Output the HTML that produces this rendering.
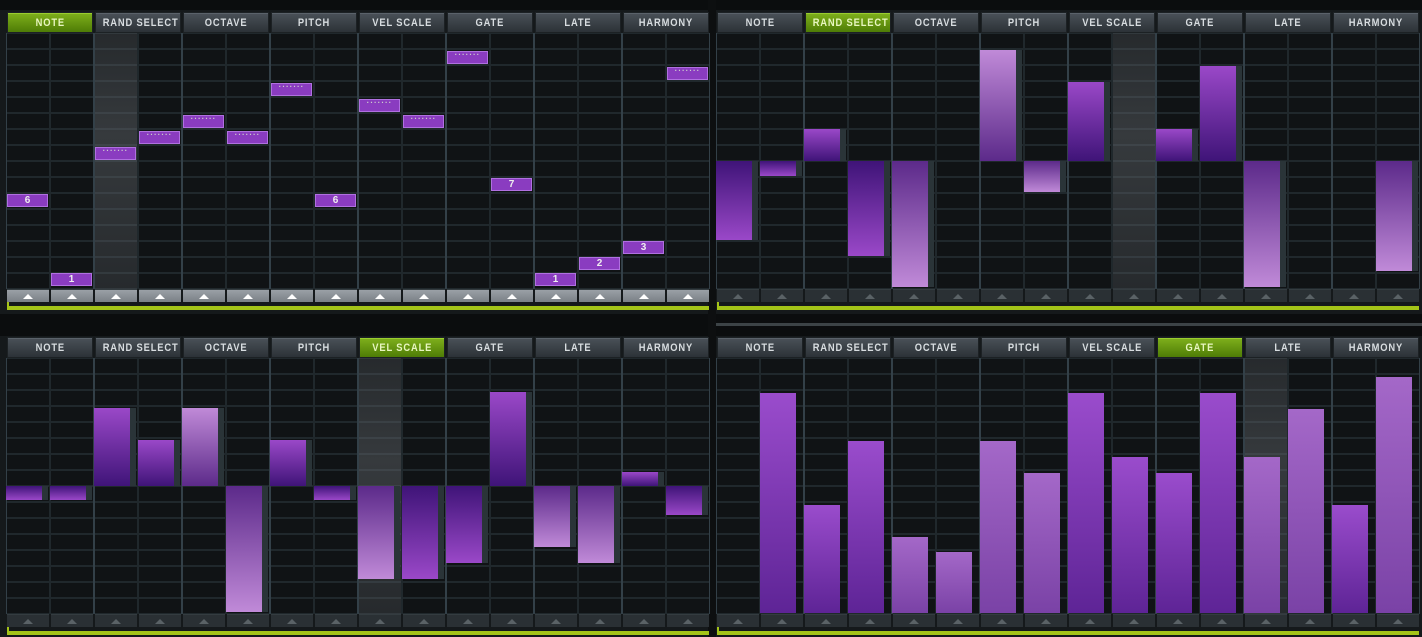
<!DOCTYPE html>
<html><head><meta charset="utf-8">
<style>
*{margin:0;padding:0;box-sizing:border-box}
body{width:1422px;height:637px;background:#15191b;position:relative;overflow:hidden;font-family:"Liberation Sans",sans-serif}
.a{position:absolute}
.grid{position:absolute;width:704px;height:256px;background-color:#101315;
background-image:
linear-gradient(90deg,#334048 0 2px,transparent 2px),
linear-gradient(90deg,#20282c 0 2px,transparent 2px),
linear-gradient(#20282c 0 2px,transparent 2px);
background-size:88px 100%,44px 100%,100% 16px;background-position:-1px 0,-1px 0,0 -1px}
.tab{position:absolute;width:86px;height:21px;background:linear-gradient(#4a5158,#2c3237);border:1px solid #1c2124;box-shadow:inset 0 1px 0 #5a626a;color:#d8dde0;font-size:11px;font-weight:bold;letter-spacing:1px;text-align:center;line-height:20px;white-space:nowrap;overflow:hidden}
.tab span{display:inline-block;transform:scaleX(.85)}
.tab.on{background:linear-gradient(#7fb01c,#4e7c06);color:#e8f6c0;box-shadow:inset 0 1px 0 #9acd30}
.hl{position:absolute;width:42px;height:256px;background:linear-gradient(rgba(90,95,100,.3),rgba(100,105,110,.45) 40%,rgba(90,95,100,.3))}
.btn{position:absolute;width:42px;height:13px;background:#2a3034;border-top:1px solid #343c40}
.btn:after{content:"";position:absolute;left:16px;top:4px;border-left:5px solid transparent;border-right:5px solid transparent;border-bottom:5px solid #5a6266}
.btn.lt{background:linear-gradient(#9aa0a6,#7a8086)}
.btn.lt:after{border-bottom-color:#fff}
.note{position:absolute;width:41px;height:13px;background:#8a3cc0;border:1px solid #b070e0;color:#eee;font-size:10px;font-weight:bold;text-align:center;line-height:11px}
.bar{position:absolute;width:36px}
.sh{position:absolute;width:6px;background:#2a3438}
.gl{position:absolute;height:4px;background:#a4c418}
</style></head><body>
<div class="a" style="left:0;top:0;width:1422px;height:10px;background:#0b0d0e"></div>
<div class="a" style="left:0;top:314px;width:1422px;height:22px;background:#0b0d0e"></div>
<div class="a" style="left:708px;top:323px;width:714px;height:3px;background:#3c4346"></div>
<div class="a" style="left:708px;top:0;width:8px;height:637px;background:#0d0f10"></div>
<div id="root"></div>
<script>
var names=["NOTE","RAND SELECT","OCTAVE","PITCH","VEL SCALE","GATE","LATE","HARMONY"];
var P=[{x:6,y:33,act:0,hl:2,lt:1},{x:716,y:33,act:1,hl:9,lt:0},{x:6,y:358,act:4,hl:8,lt:0},{x:716,y:358,act:5,hl:12,lt:0}];
var h="";
P.forEach(function(p){
 h+='<div class="grid" style="left:'+p.x+'px;top:'+p.y+'px"></div>';
 h+='<div class="hl" style="left:'+(p.x+44*p.hl+1)+'px;top:'+p.y+'px"></div>';
 for(var i=0;i<8;i++)h+='<div class="tab'+(i==p.act?' on':'')+'" style="left:'+(p.x+1+88*i)+'px;top:'+(p.y-21)+'px"><span>'+names[i]+'</span></div>';
 for(var i=0;i<16;i++)h+='<div class="btn'+(p.lt?' lt':'')+'" style="left:'+(p.x+1+44*i)+'px;top:'+(p.y+256)+'px"></div>';
 h+='<div class="gl" style="left:'+(p.x+1)+'px;top:'+(p.y+273)+'px;width:702px"></div>';
 h+='<div class="a" style="left:'+(p.x+1)+'px;top:'+(p.y+269)+'px;width:2px;height:6px;background:#a4c418"></div>';
});
var N=[[194,"6"],[273,"1"],[147,"d"],[131,"d"],[115,"d"],[131,"d"],[83,"d"],[194,"6"],[99,"d"],[115,"d"],[51,"d"],[178,"7"],[273,"1"],[257,"2"],[241,"3"],[67,"d"]];
N.forEach(function(n,i){h+='<div class="note" style="left:'+(7+44*i)+'px;top:'+n[0]+'px">'+(n[1]=="d"?'<span style="color:#ccc;font-size:8px;letter-spacing:1px;position:relative;top:-3px">·······</span>':n[1])+'</div>';});
function bar(x,t,b,light,tipTop){
 var c1=light?'#5c2a8a':'#3f1478',c2=light?'#c08ad8':'#9a48c8';
 var g=tipTop?'linear-gradient('+c2+','+c1+')':'linear-gradient('+c1+','+c2+')';
 h+='<div class="sh" style="left:'+(x+36)+'px;top:'+t+'px;height:'+(b-t)+'px"></div>';
 h+='<div class="bar" style="left:'+x+'px;top:'+t+'px;height:'+(b-t)+'px;background:'+g+'"></div>';
}
var B2=[[0,161,240,0],[1,161,176,0],[2,129,161,0],[3,161,256,0],[4,161,287,1],[6,50,161,1],[7,161,192,1],[8,82,161,0],[10,129,161,0],[11,66,161,0],[12,161,287,1],[15,161,271,1]];
B2.forEach(function(b){bar(716+44*b[0],b[1],b[2],b[3],b[1]<161);});
var B3=[[0,486,500,0],[1,486,500,0],[2,408,486,0],[3,440,486,0],[4,408,486,1],[5,486,612,1],[6,440,486,0],[7,486,500,0],[8,486,579,1],[9,486,579,0],[10,486,563,0],[11,392,486,0],[12,486,547,1],[13,486,563,1],[14,472,486,0],[15,486,515,0]];
B3.forEach(function(b){bar(6+44*b[0],b[1],b[2],b[3],b[1]<486);});
var B4=[[1,393],[2,505],[3,441],[4,537],[5,552],[6,441],[7,473],[8,393],[9,457],[10,473],[11,393],[12,457],[13,409],[14,505],[15,377]];
B4.forEach(function(b,i){var lt=(b[0]==4||b[0]==5||b[0]==6||b[0]==7||b[0]==12||b[0]==13||b[0]==15);
 var g=lt?'linear-gradient(#a468c8,#7a42a6)':'linear-gradient(#9a4ccc,#5e2496)';
 h+='<div class="bar" style="left:'+(716+44*b[0])+'px;top:'+b[1]+'px;height:'+(613-b[1])+'px;background:'+g+'"></div>';});
document.getElementById("root").innerHTML=h;
</script>
</body></html>
